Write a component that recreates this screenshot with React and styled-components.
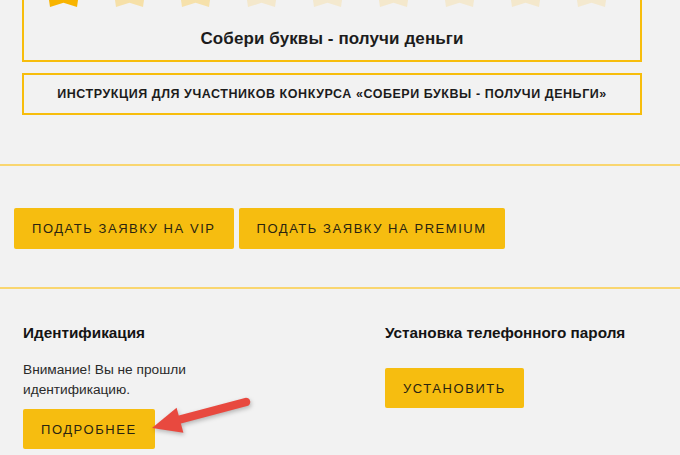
import React from "react";
import styled, { createGlobalStyle } from "styled-components";

const GlobalStyle = createGlobalStyle`
  html, body {
    margin: 0;
    padding: 0;
    background: #f2f2f2;
    font-family: "Liberation Sans", Arial, sans-serif;
    color: #1a1a1a;
    overflow: hidden;
  }
`;

const Page = styled.div`
  width: 680px;
  height: 455px;
  overflow: hidden;
`;

const Cards = styled.div`
  width: 620px;
  margin-left: 22px;
`;

const PromoCard = styled.div`
  margin-top: -20px;
  padding: 18px 0 11px;
  border: 2px solid #f7bd0c;
  box-sizing: border-box;
`;

const StarRow = styled.div`
  display: flex;
  gap: 37px;
  padding-left: 25px;
  height: 7px;
`;

const PromoTitle = styled.div`
  margin-top: 22px;
  text-align: center;
  font-size: 17px;
  line-height: 20px;
  font-weight: bold;
  letter-spacing: 0.1px;
  color: #1c1c1c;
`;

const RulesLink = styled.div`
  margin-top: 11px;
  height: 42px;
  border: 2px solid #f7bd0c;
  box-sizing: border-box;
  display: flex;
  align-items: center;
  justify-content: center;
  font-size: 12.5px;
  font-weight: bold;
  letter-spacing: 0.55px;
  text-transform: uppercase;
  color: #1c1c1c;
`;

const Divider = styled.hr`
  margin: ${p => p.$top}px 0 0;
  border: none;
  height: 2px;
  background: #f9d670;
`;

const ButtonRow = styled.div`
  display: flex;
  gap: 5px;
  padding: 42px 14px 38px;
`;

const Button = styled.button`
  height: ${p => p.$h || 40}px;
  padding: 0 18px;
  border: none;
  border-radius: 2px;
  background: #f6bd10;
  color: #2a2410;
  font-family: "Liberation Sans", Arial, sans-serif;
  font-size: 13px;
  letter-spacing: 1.55px;
  text-transform: uppercase;
  cursor: pointer;
`;

const Settings = styled.div`
  display: grid;
  grid-template-columns: 362px 1fr;
  padding: 34px 0 0 23px;
`;

const Column = styled.div`
  display: flex;
  flex-direction: column;
  align-items: flex-start;
`;

const Heading = styled.h3`
  margin: 0;
  font-size: 15.3px;
  line-height: 20px;
  font-weight: bold;
  color: #141414;
`;

const Notice = styled.p`
  margin: 17px 0 9px;
  max-width: 200px;
  font-size: 13.7px;
  line-height: 20px;
  color: #2a2a2a;
`;

const ButtonWrap = styled.div`
  position: relative;
  margin-top: ${p => p.$top || 0}px;
`;

const Pointer = styled.svg`
  position: absolute;
  left: 117px;
  top: -24px;
  width: 120px;
  height: 60px;
  overflow: visible;
  filter: drop-shadow(1px 2px 2px rgba(0, 0, 0, 0.25));
`;

const starColors = ["#f8b400", "#f6e0a8", "#f6e1ab", "#f4e8cc", "#f4e9cf", "#f4e8cc", "#f4e9cf", "#f4e8cc", "#f4e9cf"];

const StarLegs = ({ color }) => (
  <svg width="29" height="7" viewBox="0 0 29 7">
    <path d="M0 0H29L28 7L14.5 2.8L1 7Z" fill={color} />
  </svg>
);

export default function App() {
  return (
    <Page>
      <GlobalStyle />
      <Cards>
        <PromoCard>
          <StarRow>
            {starColors.map((c, i) => (
              <StarLegs key={i} color={c} />
            ))}
          </StarRow>
          <PromoTitle>Собери буквы - получи деньги</PromoTitle>
        </PromoCard>
        <RulesLink>Инструкция для участников конкурса «Собери буквы - получи деньги»</RulesLink>
      </Cards>

      <Divider $top={49} />
      <ButtonRow>
        <Button $h={41}>Подать заявку на VIP</Button>
        <Button $h={41}>Подать заявку на Premium</Button>
      </ButtonRow>
      <Divider $top={0} />

      <Settings>
        <Column>
          <Heading>Идентификация</Heading>
          <Notice>Внимание! Вы не прошли идентификацию.</Notice>
          <ButtonWrap>
            <Button>Подробнее</Button>
            <Pointer viewBox="0 0 120 60">
              <line x1="38" y1="35" x2="106" y2="17" stroke="#e8493f" strokeWidth="8.5" strokeLinecap="round" />
              <polygon points="12,43 36.6,22.8 43.4,47.8" fill="#e8493f" />
            </Pointer>
          </ButtonWrap>
        </Column>
        <Column>
          <Heading>Установка телефонного пароля</Heading>
          <ButtonWrap $top={25}>
            <Button>Установить</Button>
          </ButtonWrap>
        </Column>
      </Settings>
    </Page>
  );
}
